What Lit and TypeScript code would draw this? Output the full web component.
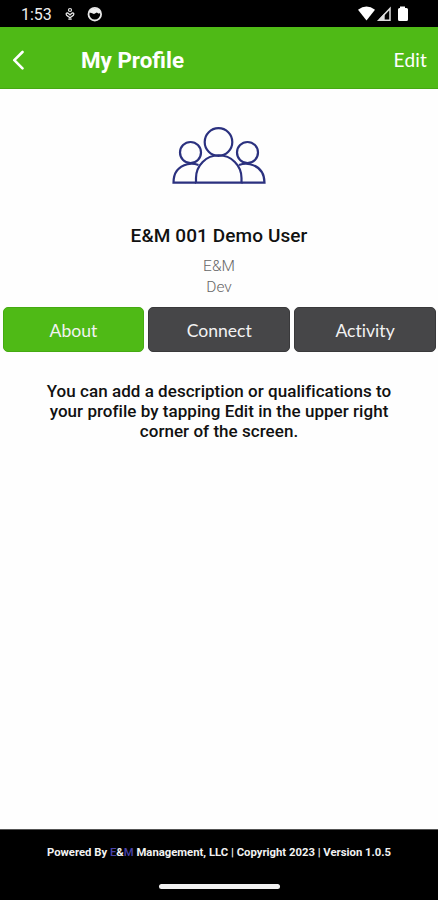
import { LitElement, html, css } from "lit";
import { customElement, property } from "lit/decorators.js";

@customElement("status-bar")
class StatusBar extends LitElement {
  static styles = css`
    :host { display: flex; height: 27px; background: #000; color: #eee; font: 16px/29px Roboto, sans-serif; }
    .time { margin-left: 21px; width: 43px; }
    svg { display: block; }
  `;
  render() {
    return html`<span class="time">1:53</span>
      <svg width="374" height="27" viewBox="64 0 374 27" fill="none" stroke="#e8e8e8">
        <circle cx="70" cy="10" r="1.5" stroke-width="1.2" />
        <path d="M70 17.8 66.6 15.2Q65.4 12.9 67.6 12.8L70 14.8 72.4 12.8Q74.6 12.9 73.4 15.2ZM68.3 19.2H71.7" stroke-width="1.3" />
        <circle cx="94.8" cy="14.2" r="6.3" stroke-width="1.8" />
        <path d="M89.2 12.4Q90 8.4 94.8 8.4T100.4 12.4L99 13.8 96.8 12.6 94 14 91.5 13Z" fill="#eee" stroke="none" />
        <path d="M358 9.8Q366.5 3 375 9.8L366.5 20.6Z" fill="#fff" stroke="none" />
        <path d="M378.8 20.2 390 8.4V20.2Z" stroke="#ddd" stroke-width="1.5" />
        <path d="M377.4 20.9 384.7 13V20.9Z" fill="#ddd" stroke="none" />
        <path d="M400 6.5H405V8H406.5Q408 8 408 9.5V19.5Q408 21 406.5 21H399.5Q398 21 398 19.5V9.5Q398 8 399.5 8H400Z" fill="#fff" stroke="none" />
      </svg>`;
  }
}

@customElement("nav-header")
class NavHeader extends LitElement {
  static styles = css`
    :host { display: flex; align-items: center; height: 62px; box-sizing: border-box; padding: 5px 11px 0 12px;
      background: #4fba16; color: #fff; border-bottom: 1px solid #45a812; }
    h1 { flex: 1; margin: 0 0 1px 56px; font: 700 22.4px/28px Roboto, sans-serif; }
    .edit { font: 19px/28px Lato, sans-serif; letter-spacing: .2px; }
    svg { margin-bottom: 1px; }
  `;
  render() {
    return html`<svg width="13" height="20" viewBox="0 0 13 20" fill="none" stroke="#fff" stroke-width="2.6" stroke-linecap="round" stroke-linejoin="round"><path d="M10.5 2 2.3 10.2 10.5 18.3" /></svg>
      <h1>My Profile</h1><span class="edit">Edit</span>`;
  }
}

@customElement("profile-card")
class ProfileCard extends LitElement {
  static styles = css`
    :host { display: flex; flex-direction: column; align-items: center; height: 218px; text-align: center; }
    svg { margin-top: 33px; flex: none; }
    .name { margin-top: 34px; font: 500 19px/24px Roboto, sans-serif; color: #111; letter-spacing: .1px; }
    .detail { font: 300 15.5px/21px Roboto, sans-serif; color: #666; }
    .org { margin-top: 8px; }
  `;
  render() {
    return html`<svg width="98" height="68" viewBox="170 122 98 68" fill="none" stroke="#2b317f" stroke-width="2.2" stroke-linejoin="miter">
        <circle cx="218.5" cy="142" r="13.8" />
        <circle cx="190.5" cy="152.5" r="10.5" />
        <circle cx="247.5" cy="152.5" r="10.5" />
        <path d="M196 182.7V178A22.5 22.5 0 0 1 241.5 178V182.7Z" />
        <path d="M198.5 165Q193 163 187.5 164.2Q173.5 167.5 173.5 182.7H196" />
        <path d="M239 165Q244.5 163 250 164.2Q264.3 167.5 264.5 182.7H241.5" />
      </svg>
      <div class="name">E&amp;M 001 Demo User</div>
      <div class="detail org">E&amp;M</div>
      <div class="detail">Dev</div>`;
  }
}

@customElement("tab-row")
class TabRow extends LitElement {
  @property() active = "About";
  static styles = css`
    :host { display: grid; grid-template-columns: repeat(3, 1fr); gap: 4px; padding: 0 2px 0 2.5px; }
    button { height: 45px; border: 1px solid #39393b; border-radius: 5px; background: #464648; color: #f2f2f2;
      font: 17.6px/24px Lato, sans-serif; font-variant-ligatures: none; padding: 2px 0 0; margin: 0; }
    .active { background: #4fba16; border-color: #45aa12; }
  `;
  render() {
    return html`${["About", "Connect", "Activity"].map(
      (t) => html`<button class=${t === this.active ? "active" : ""}>${t}</button>`
    )}`;
  }
}

@customElement("app-root")
class AppRoot extends LitElement {
  static styles = css`
    :host { display: flex; flex-direction: column; height: 900px; background: #fefefe; overflow: hidden; }
    .about { margin: 29px 0 0; text-align: center; font: 500 17px/20px Roboto, sans-serif; letter-spacing: .04px; color: #111; white-space: nowrap; }
    footer { margin-top: auto; height: 71px; box-sizing: border-box; border-top: 1px solid #555; background: #000; color: #f2f2f2;
      display: flex; flex-direction: column; align-items: center; }
    .legal { margin-top: 15px; font: 700 11.3px/16px Roboto, sans-serif; white-space: nowrap; }
    .brand { font-weight: 500; color: #4a43a8; }
    .handle { margin-top: auto; margin-bottom: 11px; width: 121px; height: 5px; border-radius: 3px; background: #f2f2f2; }
  `;
  render() {
    return html`<status-bar></status-bar>
      <nav-header></nav-header>
      <profile-card></profile-card>
      <tab-row></tab-row>
      <p class="about">You can add a description or qualifications to<br />your profile by tapping Edit in the upper right<br />corner of the screen.</p>
      <footer>
        <div class="legal">Powered By <span class="brand">E</span>&amp;<span class="brand">M</span> Management, LLC | Copyright 2023 | Version 1.0.5</div>
        <div class="handle"></div>
      </footer>`;
  }
}
